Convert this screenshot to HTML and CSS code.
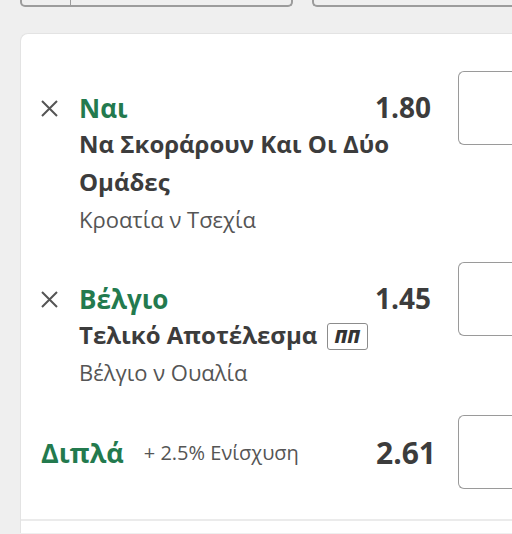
FILE: index.html
```html
<!DOCTYPE html>
<html lang="el">
<head>
<meta charset="utf-8">
<link rel="stylesheet" href="styles.css">
</head>
<body>
<div class="top">
  <div class="field field-a"><div class="field-cell"></div></div>
  <div class="field field-b"></div>
</div>
<div class="card">
  <div class="section">
    <div class="bet">
      <div class="remove"><svg width="17" height="17" viewBox="0 0 17 17"><path d="M1 1L16 16M16 1L1 16" stroke="#555" stroke-width="2" fill="none"/></svg></div>
      <div class="info">
        <div class="head"><span class="pick">Ναι</span><span class="odds">1.80</span></div>
        <div class="market">Να Σκοράρουν Και Οι Δύο Ομάδες</div>
        <div class="event">Κροατία ν Τσεχία</div>
      </div>
      <div class="stake"></div>
    </div>
    <div class="bet">
      <div class="remove"><svg width="17" height="17" viewBox="0 0 17 17"><path d="M1 1L16 16M16 1L1 16" stroke="#555" stroke-width="2" fill="none"/></svg></div>
      <div class="info">
        <div class="head"><span class="pick">Βέλγιο</span><span class="odds">1.45</span></div>
        <div class="market">Τελικό Αποτέλεσμα <span class="badge">ΠΠ</span></div>
        <div class="event">Βέλγιο ν Ουαλία</div>
      </div>
      <div class="stake"></div>
    </div>
    <div class="multi">
      <span class="multi-name">Διπλά</span>
      <span class="boost">+ 2.5% Ενίσχυση</span>
      <span class="multi-odds">2.61</span>
      <div class="stake"></div>
    </div>
  </div>
  <div class="rest"></div>
</div>
</body>
</html>
```
FILE: styles.css
```css
html, body {
  margin: 0;
  padding: 0;
  background: #efefef;
  font-family: "Open Sans", "Noto Sans", sans-serif;
  overflow: hidden;
}
.top {
  display: flex;
  gap: 19px;
  padding-left: 20px;
  height: 7px;
}
.field {
  height: 5px;
  border: 2px solid #9c9c9c;
  border-top: none;
  border-radius: 0 0 5px 5px;
}
.field-a {
  width: 269px;
}
.field-cell {
  width: 48px;
  height: 100%;
  border-right: 1.5px solid #9c9c9c;
}
.field-b {
  flex: 1;
  border-right: none;
  border-radius: 0 0 0 5px;
}
.card {
  margin: 26px -20px 0 20px;
  background: #fff;
  border: 1px solid #e3e3e3;
  border-right: none;
  border-bottom: none;
  border-radius: 8px 0 0 0;
}
.section {
  padding: 12px 0 30px;
  border-bottom: 2px solid #ebebeb;
}
.bet {
  display: flex;
  align-items: flex-start;
  padding: 25px 0 0 20px;
}
.remove {
  width: 38px;
  padding-top: 29px;
  flex: none;
}
.remove svg {
  display: block;
}
.info {
  flex: 1;
  padding-top: 19px;
}
.head {
  display: flex;
  justify-content: space-between;
  align-items: baseline;
  line-height: 34px;
}
.pick {
  color: #237a4e;
  font-weight: 700;
  font-size: 26px;
}
.odds {
  color: #3c3c3c;
  font-weight: 700;
  font-size: 28px;
}
.market {
  color: #3c3c3c;
  font-weight: 700;
  font-size: 24px;
  line-height: 38px;
}
.event {
  color: #555;
  font-size: 22px;
  line-height: 36px;
}
.badge {
  display: inline-block;
  margin-left: 3px;
  padding: 0 7px;
  border: 1.5px solid #8c8c8c;
  border-radius: 3px;
  font-size: 18px;
  font-style: italic;
  font-weight: 800;
  line-height: 25px;
  vertical-align: 1px;
  color: #333;
}
.stake {
  flex: none;
  width: 73px;
  height: 72px;
  margin-left: 27px;
  border: 1.5px solid #9a9a9a;
  border-right: none;
  border-radius: 6px 0 0 6px;
}
.multi {
  display: flex;
  align-items: center;
  padding: 25px 0 0 20px;
}
.multi-name {
  color: #237a4e;
  font-weight: 700;
  font-size: 27px;
}
.boost {
  margin-left: 20px;
  color: #555;
  font-size: 20px;
  flex: 1;
}
.multi-odds {
  color: #3c3c3c;
  font-weight: 700;
  font-size: 30px;
}
.multi .stake {
  margin-left: 22px;
}
.rest {
  height: 12px;
}
```
